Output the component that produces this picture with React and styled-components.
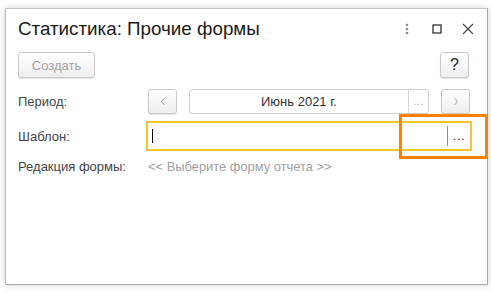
import React from "react";
import styled, { createGlobalStyle } from "styled-components";

const Global = createGlobalStyle`
  html, body { margin: 0; padding: 0; background: #fff; }
  body { font-family: "Liberation Sans", Arial, sans-serif; }
`;

const Page = styled.div`
  position: relative;
  width: 491px;
  height: 294px;
  padding: 8px 0 0 5px;
  box-sizing: border-box;
`;

const Window = styled.div`
  width: 483px;
  height: 277px;
  box-sizing: border-box;
  border: 1px solid #a8a8a8;
  border-top-color: #c4c4c4;
  border-left-color: #bcbcbc;
  background: #fff;
  box-shadow: 0 0 7px rgba(0, 0, 0, 0.18);
  display: flex;
  flex-direction: column;
`;

const Header = styled.div`
  height: 40px;
  display: flex;
  align-items: center;
  padding: 0 4px 0 12px;
`;

const Title = styled.div`
  flex: 1;
  font-size: 18.8px;
  color: #1a1a1a;
  white-space: nowrap;
`;

const HeadIcon = styled.div`
  width: ${(p) => p.$w || 30}px;
  height: 30px;
  display: flex;
  align-items: center;
  justify-content: center;
`;

const Toolbar = styled.div`
  margin-top: 3px;
  height: 26px;
  display: flex;
  justify-content: space-between;
  padding: 0 18px 0 12px;
`;

const Btn = styled.button`
  box-sizing: border-box;
  height: ${(p) => p.$h || 26}px;
  width: ${(p) => p.$w}px;
  padding: 0;
  border: 1px solid #c9c9c9;
  border-radius: 3px;
  background: linear-gradient(#ffffff, #eeeeee);
  box-shadow: 0 1px 1px rgba(0, 0, 0, 0.12);
  font-family: "Liberation Sans", Arial, sans-serif;
  font-size: ${(p) => p.$fs || 13}px;
  color: ${(p) => p.$c || "#333"};
  display: flex;
  align-items: center;
  justify-content: center;
`;

const Form = styled.div`
  display: grid;
  grid-template-columns: 130px 1fr;
  padding: 0 17px 0 12px;
  align-items: center;
`;

const Label = styled.div`
  font-size: 13px;
  color: #444;
  white-space: nowrap;
`;

const Row = styled.div`
  display: flex;
  align-items: center;
  gap: 12px;
  height: 25px;
`;

const DateField = styled.div`
  flex: 1;
  height: 25px;
  box-sizing: border-box;
  border: 1px solid #cfcfcf;
  border-radius: 3px;
  display: flex;
`;

const DateText = styled.div`
  flex: 1;
  display: flex;
  align-items: center;
  justify-content: center;
  font-size: 13px;
  color: #333;
`;

const Choose = styled.div`
  width: ${(p) => p.$w || 20}px;
  border-left: 1px solid ${(p) => p.$line || "#d8d8d8"};
  display: flex;
  align-items: center;
  justify-content: center;
  font-size: ${(p) => p.$fs || 11}px;
  color: ${(p) => p.$c || "#aaa"};
  letter-spacing: 0.5px;
  padding-bottom: 2px;
  box-sizing: border-box;
`;

const Input = styled.div`
  margin: 0 -2px;
  height: 30px;
  box-sizing: border-box;
  border: 2px solid #f7c626;
  display: flex;
  align-items: stretch;
  padding: 3px 0;
`;

const InputArea = styled.div`
  flex: 1;
  display: flex;
  align-items: center;
  padding-left: 4px;
`;

const Caret = styled.span`
  display: block;
  width: 1px;
  height: 14px;
  background: #000;
`;

const Hint = styled.div`
  font-size: 12.9px;
  color: #a0a0a0;
  white-space: nowrap;
`;

const Cell = styled.div`
  height: ${(p) => p.$h}px;
  display: flex;
  align-items: center;
`;

const Spacer = styled.div`
  height: ${(p) => p.$h}px;
  grid-column: 1 / -1;
`;

const Annotation = styled.div`
  position: absolute;
  left: 399px;
  top: 114px;
  width: 89px;
  height: 45px;
  box-sizing: border-box;
  border: 3px solid #ff8000;
`;

const Chevron = ({ dir }) => (
  <svg width="6" height="9" viewBox="0 0 6 9">
    <path
      d={dir === "left" ? "M4.5 1 L1.5 4.5 L4.5 8" : "M1.5 1 L4.5 4.5 L1.5 8"}
      fill="none"
      stroke="#a0a0a0"
      strokeWidth="1"
    />
  </svg>
);

export default function App() {
  return (
    <>
      <Global />
      <Page>
        <Window>
          <Header>
            <Title>Статистика: Прочие формы</Title>
            <HeadIcon $w={28}>
              <svg width="4" height="12" viewBox="0 0 4 12">
                <circle cx="2" cy="2" r="1.3" fill="#8a8a8a" />
                <circle cx="2" cy="6" r="1.3" fill="#8a8a8a" />
                <circle cx="2" cy="10" r="1.3" fill="#8a8a8a" />
              </svg>
            </HeadIcon>
            <HeadIcon $w={32}>
              <svg width="10" height="10" viewBox="0 0 10 10">
                <rect x="1" y="1" width="8" height="8" fill="none" stroke="#333" strokeWidth="1.3" />
              </svg>
            </HeadIcon>
            <HeadIcon>
              <svg width="12" height="12" viewBox="0 0 12 12">
                <path d="M1 1 L11 11 M11 1 L1 11" stroke="#444" strokeWidth="1.1" />
              </svg>
            </HeadIcon>
          </Header>
          <Toolbar>
            <Btn $w={77} $c="#a3a3a3">Создать</Btn>
            <Btn $w={29} $fs={16} $c="#222">?</Btn>
          </Toolbar>
          <Form>
            <Spacer $h={11} />
            <Label>Период:</Label>
            <Row>
              <Btn $w={29} $h={25}>
                <Chevron dir="left" />
              </Btn>
              <DateField>
                <DateText>Июнь 2021 г.</DateText>
                <Choose>...</Choose>
              </DateField>
              <Btn $w={29} $h={25}>
                <Chevron dir="right" />
              </Btn>
            </Row>
            <Spacer $h={7} />
            <Label>Шаблон:</Label>
            <Input>
              <InputArea>
                <Caret />
              </InputArea>
              <Choose $line="#8c8c8c" $c="#333" $fs={13} $w={23}>
                ...
              </Choose>
            </Input>
            <Cell $h={30}>
              <Label>Редакция формы:</Label>
            </Cell>
            <Cell $h={30}>
              <Hint>&lt;&lt; Выберите форму отчета &gt;&gt;</Hint>
            </Cell>
          </Form>
        </Window>
        <Annotation />
      </Page>
    </>
  );
}
